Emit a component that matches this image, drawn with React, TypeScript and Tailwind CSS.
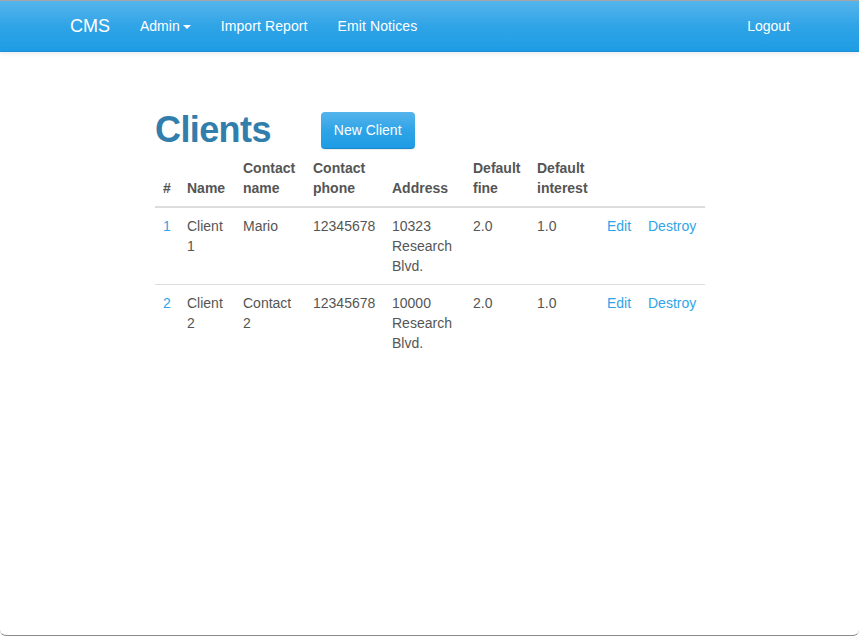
import React from 'react';

type Client = {
  id: number;
  name: string;
  contactName: string;
  phone: string;
  address: string;
  fine: string;
  interest: string;
};

const clients: Client[] = [
  { id: 1, name: 'Client 1', contactName: 'Mario', phone: '12345678', address: '10323 Research Blvd.', fine: '2.0', interest: '1.0' },
  { id: 2, name: 'Client 2', contactName: 'Contact 2', phone: '12345678', address: '10000 Research Blvd.', fine: '2.0', interest: '1.0' },
];

const headers = ['#', 'Name', 'Contact name', 'Contact phone', 'Address', 'Default fine', 'Default interest', '', ''];
const widths = ['w-[24px]', 'w-[56px]', 'w-[70px]', 'w-[79px]', 'w-[81px]', 'w-[64px]', 'w-[70px]', 'w-[41px]', 'w-[65px]'];

const Navbar = () => (
  <nav className="h-[52px] border-t border-t-[#a6a6a6] border-b border-b-[#1c8fd6] bg-gradient-to-b from-[#54b4eb] via-[#2fa4e7] to-[#1d9ce5] shadow-[0_2px_4px_rgba(0,0,0,0.08)]">
    <div className="flex items-center h-full pl-[70px] pr-[69px] text-white text-[14px]">
      <span className="text-[18px] pr-[15px]">CMS</span>
      <span className="flex items-center px-[15px]">
        Admin
        <span className="ml-[3px] mt-[1px] w-0 h-0 border-l-[4px] border-r-[4px] border-t-[4px] border-l-transparent border-r-transparent border-t-white" />
      </span>
      <span className="px-[15px] tracking-[0.1px]">Import Report</span>
      <span className="px-[15px] tracking-[0.1px]">Emit Notices</span>
      <span className="ml-auto">Logout</span>
    </div>
  </nav>
);

export default function App() {
  return (
    <div className="h-[636px] bg-white border-b border-b-[#8a8a8a] rounded-b-[6px] overflow-hidden font-['Liberation_Sans',Arial,sans-serif] text-[14px] leading-[20px] text-[#555555]">
      <Navbar />
      <div className="pl-[155px] pt-[58px]">
        <div className="flex items-center h-[40px]">
          <h1 className="text-[36px] leading-[40px] font-bold text-[#317eac] tracking-[-0.6px]">Clients</h1>
          <button className="ml-[50px] h-[37px] px-[13px] rounded-[4px] text-white text-[14px] bg-gradient-to-b from-[#54b4eb] via-[#2fa4e7] to-[#1d9ce5] border-b border-b-[#178acc] shadow-[0_1px_1px_rgba(0,0,0,0.08)]">
            New Client
          </button>
        </div>
        <table className="table-fixed w-[550px] border-collapse">
          <colgroup>
            {widths.map((w, i) => (
              <col key={i} className={w} />
            ))}
          </colgroup>
          <thead>
            <tr>
              {headers.map((h, i) => (
                <th key={i} className="p-[8px] text-left align-bottom font-bold border-b-2 border-b-[#dddddd]">
                  {h}
                </th>
              ))}
            </tr>
          </thead>
          <tbody>
            {clients.map((c) => (
              <tr key={c.id} className="border-b border-b-[#dddddd] last:border-b-0">
                <td className="p-[8px] align-top text-[#2fa4e7]">{c.id}</td>
                <td className="p-[8px] align-top">{c.name}</td>
                <td className="p-[8px] align-top">{c.contactName}</td>
                <td className="p-[8px] align-top">{c.phone}</td>
                <td className="p-[8px] align-top">{c.address}</td>
                <td className="p-[8px] align-top">{c.fine}</td>
                <td className="p-[8px] align-top">{c.interest}</td>
                <td className="p-[8px] align-top text-[#2fa4e7]">Edit</td>
                <td className="p-[8px] align-top text-[#2fa4e7]">Destroy</td>
              </tr>
            ))}
          </tbody>
        </table>
      </div>
    </div>
  );
}
